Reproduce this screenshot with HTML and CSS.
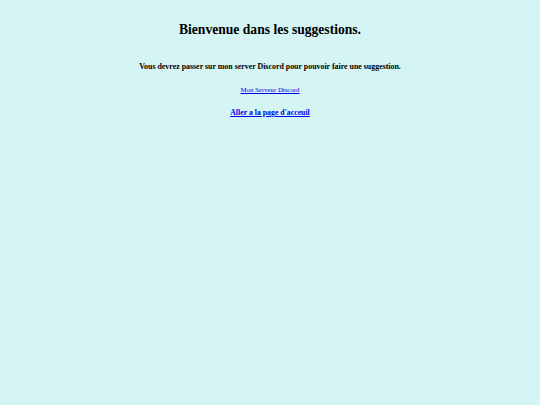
FILE: index.html
```html
<!DOCTYPE html>
<html lang="fr">
<head>
<meta charset="utf-8">
<title>Suggestions</title>
<link rel="stylesheet" href="styles.css">
</head>
<body>
<main class="page">
  <h1 class="title">Bienvenue dans les suggestions.</h1>
  <p class="notice">Vous devrez passer sur mon server Discord pour pouvoir faire une suggestion.</p>
  <a class="server-link" href="#">Mon Serveur Discord</a>
  <a class="home-link" href="#">Aller a la page d'acceuil</a>
</main>
</body>
</html>
```
FILE: styles.css
```css
html, body {
  margin: 0;
  padding: 0;
  background: #d5f5f5;
}
body {
  font-family: "Liberation Serif", "Times New Roman", serif;
  color: #000;
}
.page {
  display: flex;
  flex-direction: column;
  align-items: center;
  padding-top: 22px;
}
.title {
  margin: 0;
  font-size: 13.6px;
  font-weight: bold;
  line-height: 16px;
}
.notice {
  margin: 24px 0 0;
  font-size: 7.9px;
  font-weight: bold;
  line-height: 10px;
}
.server-link {
  margin-top: 12.5px;
  font-size: 6.8px;
  line-height: 9px;
  color: #0000ee;
}
.home-link {
  margin-top: 14.5px;
  font-size: 7.8px;
  font-weight: bold;
  line-height: 10px;
  color: #0000ee;
}
```
